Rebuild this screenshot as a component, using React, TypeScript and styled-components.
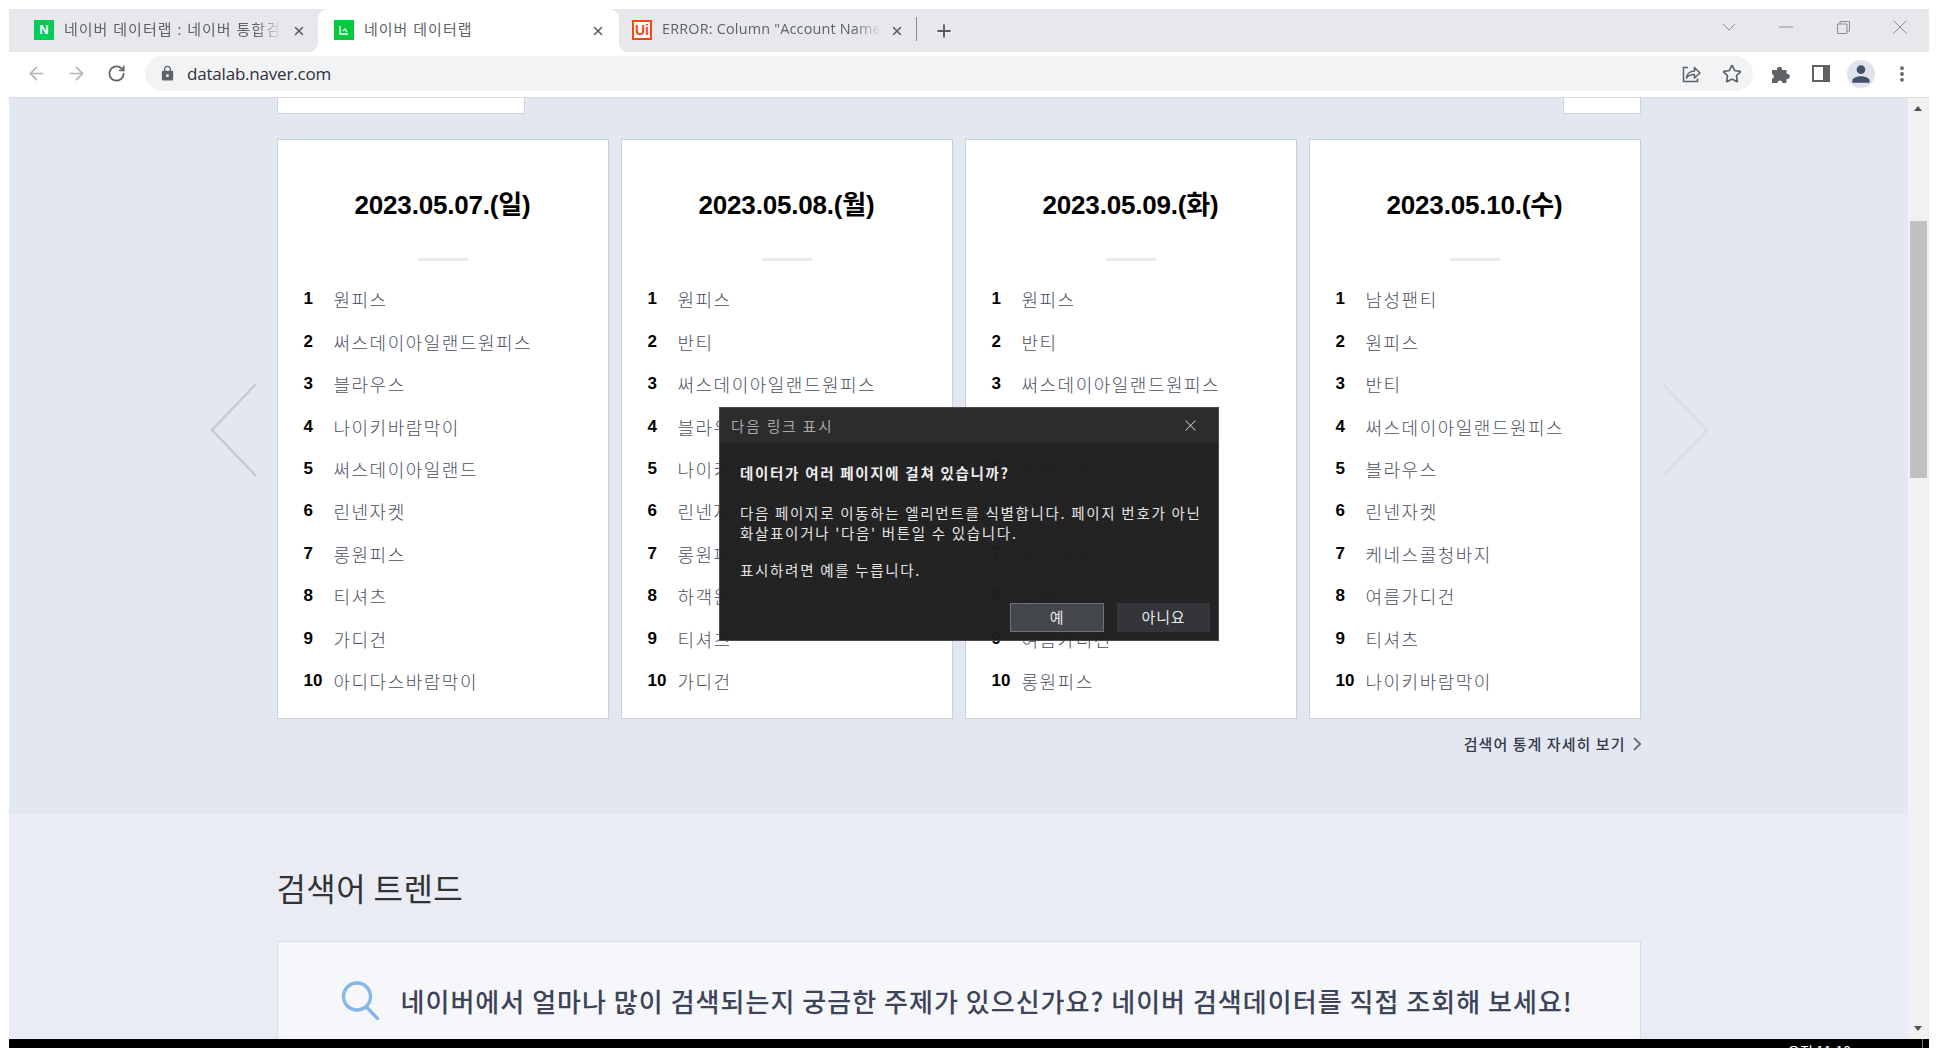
import React from "react";
import styled, { createGlobalStyle } from "styled-components";
import { ArrowLeft, ArrowRight, MoreVertical, Plus, RotateCw, Star, X } from "lucide-react";
import { MdLock, MdPerson } from "react-icons/md";

const KR = `"Noto Sans CJK KR", sans-serif`;
const LATIN_KR = `"Liberation Sans", "Noto Sans CJK KR", sans-serif`;

const GlobalStyle = createGlobalStyle`
  html, body { margin: 0; padding: 0; background: #fff; overflow: hidden; }
  * { box-sizing: border-box; }
`;

const Screen = styled.div`
  width: 1938px;
  height: 1048px;
  padding: 9px 9px 0;
  background: #fff;
  font-family: ${KR};
`;

const Browser = styled.div`
  display: flex;
  flex-direction: column;
  width: 1920px;
  height: 1039px;
  overflow: hidden;
`;

/* tab strip */
const TabStrip = styled.div`
  display: flex;
  align-items: stretch;
  height: 43px;
  background: #e7e8ec;
  flex: none;
`;

const Tab = styled.div<{ $active?: boolean; $width: number; $inset: number; $end: number }>`
  position: relative;
  display: flex;
  align-items: center;
  flex: none;
  width: ${(p) => p.$width}px;
  padding: 0 ${(p) => p.$end}px 0 ${(p) => p.$inset}px;
  background: ${(p) => (p.$active ? "#fff" : "transparent")};
  border-radius: ${(p) => (p.$active ? "10px 10px 0 0" : "0")};

  ${(p) =>
    p.$active &&
    `
    &::before, &::after {
      content: "";
      position: absolute;
      bottom: 0;
      width: 10px;
      height: 10px;
    }
    &::before { left: -10px; background: radial-gradient(circle at 0 0, transparent 10px, #fff 10.5px); }
    &::after { right: -10px; background: radial-gradient(circle at 100% 0, transparent 10px, #fff 10.5px); }
  `}
`;

const Favicon = styled.span<{ $kind: "naver" | "lab" | "ui" }>`
  display: flex;
  align-items: center;
  justify-content: center;
  flex: none;
  width: 20px;
  height: 20px;
  margin-top: -2px;
  font-family: "Liberation Sans", sans-serif;
  font-weight: 700;
  font-size: ${(p) => (p.$kind === "ui" ? 14 : 13)}px;
  color: ${(p) => (p.$kind === "ui" ? "#fa4616" : "#fff")};
  background: ${(p) =>
    p.$kind === "naver" ? "linear-gradient(#06c755, #03cf5d)" : p.$kind === "lab" ? "#06c93e" : "#fff"};
  border: ${(p) => (p.$kind === "ui" ? "2px solid #fa4616" : "none")};
`;

const TabTitle = styled.span<{ $fade?: boolean; $width: number; $latin?: boolean }>`
  flex: none;
  width: ${(p) => p.$width}px;
  margin-left: 10px;
  margin-top: -4px;
  overflow: hidden;
  white-space: nowrap;
  font-family: "Open Sans", ${KR};
  font-size: ${(p) => (p.$latin ? 14.4 : 15)}px;
  letter-spacing: ${(p) => (p.$latin ? 0.2 : 1)}px;
  color: #5f6368;
  ${(p) =>
    p.$fade &&
    `-webkit-mask-image: linear-gradient(to right, #000 88%, transparent);
     mask-image: linear-gradient(to right, #000 88%, transparent);`}
`;

const TabClose = styled.span`
  display: flex;
  margin-left: auto;
  color: #5a5d61;
`;

const TabDivider = styled.span`
  flex: none;
  width: 1px;
  height: 24px;
  margin: 8px 0 0 3px;
  background: #85888d;
`;

const NewTab = styled.span`
  display: flex;
  align-items: center;
  margin-left: 17px;
  color: #56595d;
`;

const WindowControls = styled.div`
  display: flex;
  align-items: center;
  margin-left: auto;
  padding: 0 22px 7px 0;
  gap: 43.5px;
  color: #8b8d90;
`;

/* toolbar */
const Toolbar = styled.div`
  display: flex;
  align-items: center;
  flex: none;
  height: 46px;
  padding: 0 17px 2px 15px;
  background: #fff;
  border-bottom: 1px solid #dadce0;
`;

const NavButton = styled.span<{ $off?: boolean }>`
  display: flex;
  width: 24px;
  justify-content: center;
  margin-right: 16px;
  color: ${(p) => (p.$off ? "#b3b5b8" : "#5f6368")};
`;

const Omnibox = styled.div`
  display: flex;
  align-items: center;
  flex: 1;
  height: 35px;
  margin: 0 18px 0 1px;
  padding: 0 11px 0 14px;
  background: #f1f3f4;
  border-radius: 18px;
`;

const Url = styled.span`
  margin-left: 11px;
  font-family: "Open Sans", sans-serif;
  font-size: 17px;
  letter-spacing: -0.2px;
  color: #2d3138;
`;

const OmniActions = styled.div`
  display: flex;
  align-items: center;
  gap: 21px;
  margin-left: auto;
  color: #5f6368;
`;

const ToolActions = styled.div`
  display: flex;
  align-items: center;
  gap: 17px;
  color: #5f6368;
`;

const PanelSlot = styled.span`
  display: flex;
  margin-left: 4px;
`;

const Avatar = styled.span`
  display: flex;
  align-items: center;
  justify-content: center;
  width: 28px;
  height: 28px;
  border-radius: 50%;
  background: #e0e3eb;
  color: #44516b;
`;

/* page */
const Viewport = styled.div`
  position: relative;
  display: flex;
  flex: 1;
  min-height: 0;
`;

const Page = styled.div`
  flex: 1;
  min-width: 0;
  overflow: hidden;
`;

const TopSection = styled.section`
  position: relative;
  height: 716px;
  background: #e3e7ef;
`;

const Wrap = styled.div`
  width: 1364px;
  margin: 0 auto;
`;

const Stubs = styled.div`
  display: flex;
  justify-content: space-between;
  height: 16px;
`;

const Stub = styled.div<{ $width: number }>`
  width: ${(p) => p.$width}px;
  background: #fff;
  border: 1px solid #cfd5de;
  border-top: 0;
`;

const Cards = styled.div`
  display: grid;
  grid-template-columns: repeat(4, 332px);
  gap: 12px;
  margin-top: 25px;
`;

const Card = styled.article`
  height: 580px;
  padding-top: 45px;
  background: #fff;
  border: 1px solid #c9d0da;
`;

const CardDate = styled.h3`
  margin: 0;
  height: 40px;
  font: 700 26px/40px ${LATIN_KR};
  letter-spacing: -0.2px;
  text-align: center;
  color: #000;
`;

const CardRule = styled.div`
  width: 50px;
  height: 3px;
  margin: 33px auto 17px;
  background: #e8ebee;
`;

const Ranks = styled.ol`
  margin: 0;
  padding: 0 0 0 26px;
  list-style: none;
`;

const RankRow = styled.li`
  display: flex;
  align-items: center;
  height: 42.45px;
`;

const RankNo = styled.span`
  flex: none;
  width: 30px;
  font: 700 17px "Liberation Sans", sans-serif;
  color: #000;
`;

const RankName = styled.span`
  font-family: ${KR};
  font-weight: 300;
  font-size: 18px;
  letter-spacing: 1.5px;
  color: #4a5060;
`;

const MoreLink = styled.div`
  display: flex;
  justify-content: flex-end;
  align-items: center;
  gap: 7px;
  margin-top: 14px;
  font-family: ${KR};
  font-weight: 500;
  font-size: 15px;
  letter-spacing: 1.05px;
  color: #33374d;
`;

const SlideArrow = styled.svg<{ $side: "left" | "right" }>`
  position: absolute;
  top: 285px;
  ${(p) => (p.$side === "left" ? "left: 201px;" : "left: 1652px;")}
  width: 48px;
  height: 94px;
  fill: none;
  stroke: ${(p) => (p.$side === "left" ? "#c3ccd5" : "#d8dde6")};
  stroke-width: 2.5;
`;

const BottomSection = styled.section`
  height: 225px;
  padding-top: 53px;
  overflow: hidden;
  background: #e9ecf4;
`;

const SectionTitle = styled.h2`
  margin: 0;
  font: 400 32px/40px ${KR};
  letter-spacing: 0.4px;
  color: #333;
`;

const Prompt = styled.div`
  display: flex;
  align-items: center;
  gap: 21px;
  height: 160px;
  margin-top: 34px;
  padding: 0 0 42px 63px;
  background: #f6f7fb;
  border: 1px solid #d9dde6;
`;

const PromptText = styled.p`
  margin: 0;
  font-family: ${KR};
  font-size: 26px;
  font-weight: 500;
  letter-spacing: 1.03px;
  white-space: nowrap;
  color: #3d4358;
`;

/* scrollbar */
const Scrollbar = styled.div`
  position: relative;
  flex: none;
  width: 21px;
  background: #f1f1f1;
`;

const ScrollThumb = styled.div`
  position: absolute;
  left: 2px;
  top: 123px;
  width: 17px;
  height: 257px;
  background: #c1c1c1;
`;

const ScrollArrow = styled.span<{ $down?: boolean }>`
  position: absolute;
  left: 6px;
  ${(p) => (p.$down ? "bottom: 8px; border-top: 5px solid #505050;" : "top: 8px; border-bottom: 5px solid #505050;")}
  border-left: 4.5px solid transparent;
  border-right: 4.5px solid transparent;
`;

const Taskbar = styled.div`
  display: flex;
  justify-content: flex-end;
  flex: none;
  height: 9px;
  overflow: hidden;
  background: #000;
`;

const Clock = styled.span`
  margin: 3px 71px 0 0;
  font: 400 14px/18px ${KR};
  color: #fff;
`;

const TaskEdge = styled.span`
  width: 1px;
  margin-right: 6px;
  background: #777;
`;

/* dialog */
const Dialog = styled.div`
  position: absolute;
  left: 710px;
  top: 309px;
  width: 500px;
  height: 234px;
  background: rgba(31, 31, 32, 0.98);
  border: 1px solid #48494b;
  color: #e4e4e4;
`;

const DialogHead = styled.div`
  display: flex;
  align-items: center;
  justify-content: space-between;
  height: 35px;
  padding: 0 18px 0 11px;
  background: rgba(44, 45, 47, 0.98);
  font-size: 14.5px;
  letter-spacing: 2px;
  color: #a8a8a8;
`;

const DialogBody = styled.div`
  padding: 20px 0 0 20px;
  font-size: 14.5px;
  line-height: 20px;
  letter-spacing: 1.7px;
`;

const DialogQuestion = styled.p`
  margin: 0 0 20px;
  font-weight: 700;
  white-space: nowrap;
  color: #eee;
`;

const DialogPara = styled.p`
  margin: 0 0 17px;
  white-space: pre;
`;

const DialogButtons = styled.div`
  position: absolute;
  right: 8px;
  bottom: 8px;
  display: flex;
  gap: 13px;
`;

const DialogButton = styled.button<{ $primary?: boolean }>`
  width: ${(p) => (p.$primary ? 94 : 93)}px;
  height: 29px;
  padding: 0 0 2px;
  font-family: ${KR};
  font-size: 15px;
  letter-spacing: 0.9px;
  color: #e8e8e8;
  background: ${(p) => (p.$primary ? "#43464a" : "#333539")};
  border: 1px solid ${(p) => (p.$primary ? "#6e7175" : "#333539")};
`;

const days = [
  {
    date: "2023.05.07.(일)",
    items: ["원피스", "써스데이아일랜드원피스", "블라우스", "나이키바람막이", "써스데이아일랜드", "린넨자켓", "롱원피스", "티셔츠", "가디건", "아디다스바람막이"],
  },
  {
    date: "2023.05.08.(월)",
    items: ["원피스", "반티", "써스데이아일랜드원피스", "블라우스", "나이키바람막이", "린넨자켓", "롱원피스", "하객원피스", "티셔츠", "가디건"],
  },
  {
    date: "2023.05.09.(화)",
    items: ["원피스", "반티", "써스데이아일랜드원피스", "블라우스", "린넨자켓", "나이키바람막이", "하객원피스", "티셔츠", "여름가디건", "롱원피스"],
  },
  {
    date: "2023.05.10.(수)",
    items: ["남성팬티", "원피스", "반티", "써스데이아일랜드원피스", "블라우스", "린넨자켓", "케네스콜청바지", "여름가디건", "티셔츠", "나이키바람막이"],
  },
];

const ShareIcon = () => (
  <svg width="20" height="20" viewBox="0 0 20 20" fill="none" stroke="currentColor" strokeWidth="1.5">
    <path d="M7 3.500H2.500v14h14v-3" />
    <path d="M5.500 14c.5-4.500 4-7 8-7V3.500l5.500 5.500-5.500 5v-3.500c-3.500 0-6.500 1-8 3.500z" strokeLinejoin="round" />
  </svg>
);

const PuzzleIcon = () => (
  <svg width="20" height="20" viewBox="0 0 20 20" fill="currentColor">
    <path d="M1 6h5a2.600 2.600 0 1 1 5 0h4.500v3.800a2.600 2.600 0 1 1 0 5V19h-4a2.500 2.500 0 0 0-5 0H1v-4a2.600 2.600 0 0 0 0-5z" />
  </svg>
);

const PanelIcon = () => (
  <svg width="18" height="17" viewBox="0 0 18 17">
    <path d="M0 0h18v17H0z" fill="currentColor" />
    <path d="M2 2h9v13H2z" fill="#fff" />
  </svg>
);

const LabMark = () => (
  <svg width="12" height="12" viewBox="0 0 12 12" fill="none" stroke="#fff" strokeWidth="1.6">
    <path d="M2 2v8h8" />
    <path d="M5 7l2-2 2 3" stroke="#bff0cc" />
  </svg>
);

const SearchMark = () => (
  <svg width="39" height="39" viewBox="0 0 39 39" fill="none" stroke="#85b7e8" strokeWidth="3.4" strokeLinecap="round">
    <circle cx="16" cy="15.500" r="13.500" />
    <path d="M25.500 26l11 11.500" />
  </svg>
);

export default function App() {
  return (
    <Screen>
      <GlobalStyle />
      <Browser>
        <TabStrip>
          <Tab $width={309} $inset={25} $end={12}>
            <Favicon $kind="naver">N</Favicon>
            <TabTitle $fade $width={218}>네이버 데이터랩 : 네이버 통합검색</TabTitle>
            <TabClose><X size={14} strokeWidth={2.6} /></TabClose>
          </Tab>
          <Tab $active $width={301} $inset={16} $end={14}>
            <Favicon $kind="lab"><LabMark /></Favicon>
            <TabTitle $width={200}>네이버 데이터랩</TabTitle>
            <TabClose><X size={14} strokeWidth={2.6} /></TabClose>
          </Tab>
          <Tab $width={294} $inset={13} $end={9}>
            <Favicon $kind="ui">Ui</Favicon>
            <TabTitle $fade $latin $width={219}>ERROR: Column "Account Name" was not found</TabTitle>
            <TabClose><X size={14} strokeWidth={2.6} /></TabClose>
          </Tab>
          <TabDivider />
          <NewTab><Plus size={20} strokeWidth={2.2} /></NewTab>
          <WindowControls>
            <svg width="14" height="8" viewBox="0 0 14 8" fill="none" stroke="currentColor"><path d="M1 1l6 6 6-6" /></svg>
            <svg width="14" height="2" viewBox="0 0 14 2" fill="none" stroke="currentColor"><path d="M0 1h14" /></svg>
            <svg width="13" height="13" viewBox="0 0 13 13" fill="none" stroke="currentColor"><path d="M.5 3h9.500v9.500H.5zM3 3V.5h9.500V10H10" /></svg>
            <svg width="14" height="14" viewBox="0 0 14 14" fill="none" stroke="currentColor"><path d="M.5.5l13 13M13.500.5l-13 13" /></svg>
          </WindowControls>
        </TabStrip>

        <Toolbar>
          <NavButton $off><ArrowLeft size={21} strokeWidth={1.9} /></NavButton>
          <NavButton $off><ArrowRight size={21} strokeWidth={1.9} /></NavButton>
          <NavButton><RotateCw size={19} strokeWidth={2.2} /></NavButton>
          <Omnibox>
            <MdLock size={17} color="#5f6368" />
            <Url>datalab.naver.com</Url>
            <OmniActions>
              <ShareIcon />
              <Star size={20} strokeWidth={2} />
            </OmniActions>
          </Omnibox>
          <ToolActions>
            <PuzzleIcon />
            <PanelSlot><PanelIcon /></PanelSlot>
            <Avatar><MdPerson size={26} /></Avatar>
            <MoreVertical size={20} strokeWidth={2.6} />
          </ToolActions>
        </Toolbar>

        <Viewport>
          <Page>
            <TopSection>
              <Wrap>
                <Stubs>
                  <Stub $width={248} />
                  <Stub $width={78} />
                </Stubs>
                <Cards>
                  {days.map((day) => (
                    <Card key={day.date}>
                      <CardDate>{day.date}</CardDate>
                      <CardRule />
                      <Ranks>
                        {day.items.map((item, i) => (
                          <RankRow key={item}>
                            <RankNo>{i + 1}</RankNo>
                            <RankName>{item}</RankName>
                          </RankRow>
                        ))}
                      </Ranks>
                    </Card>
                  ))}
                </Cards>
                <MoreLink>
                  검색어 통계 자세히 보기
                  <svg width="8" height="14" viewBox="0 0 8 14" fill="none" stroke="#6f7382" strokeWidth="2"><path d="M1 1l6 6-6 6" /></svg>
                </MoreLink>
              </Wrap>
              <SlideArrow $side="left" viewBox="0 0 48 94"><path d="M46 1L2 47l44 46" /></SlideArrow>
              <SlideArrow $side="right" viewBox="0 0 48 94"><path d="M2 1l44 46L2 93" /></SlideArrow>
            </TopSection>
            <BottomSection>
              <Wrap>
                <SectionTitle>검색어 트렌드</SectionTitle>
                <Prompt>
                  <SearchMark />
                  <PromptText>네이버에서 얼마나 많이 검색되는지 궁금한 주제가 있으신가요? 네이버 검색데이터를 직접 조회해 보세요!</PromptText>
                </Prompt>
              </Wrap>
            </BottomSection>
          </Page>
          <Scrollbar>
            <ScrollArrow />
            <ScrollThumb />
            <ScrollArrow $down />
          </Scrollbar>

          <Dialog>
            <DialogHead>
              다음 링크 표시
              <X size={19} strokeWidth={1.3} color="#c8c8c8" />
            </DialogHead>
            <DialogBody>
              <DialogQuestion>데이터가 여러 페이지에 걸쳐 있습니까?</DialogQuestion>
              <DialogPara>{"다음 페이지로 이동하는 엘리먼트를 식별합니다. 페이지 번호가 아닌\n화살표이거나 '다음' 버튼일 수 있습니다."}</DialogPara>
              <DialogPara>표시하려면 예를 누릅니다.</DialogPara>
            </DialogBody>
            <DialogButtons>
              <DialogButton $primary>예</DialogButton>
              <DialogButton>아니요</DialogButton>
            </DialogButtons>
          </Dialog>
        </Viewport>

        <Taskbar>
          <Clock>오전 11:10</Clock>
          <TaskEdge />
        </Taskbar>
      </Browser>
    </Screen>
  );
}
